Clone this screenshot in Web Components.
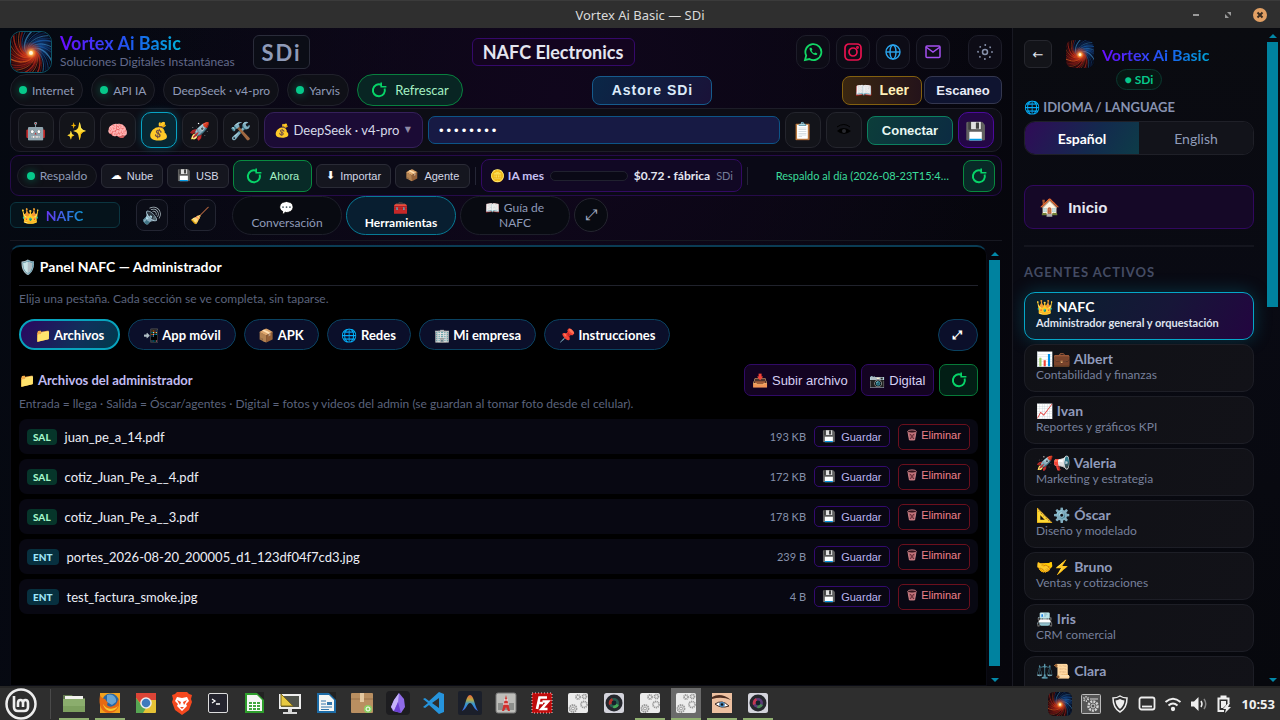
<!DOCTYPE html>
<html lang="es">
<head>
<meta charset="utf-8">
<title>Vortex Ai Basic — SDi</title>
<style>
  html, body { height: 100%; margin: 0; }
  body {
    background: #05060b; color: #e4e6f0; overflow: hidden;
    font-family: Lato, "Noto Color Emoji", sans-serif; font-size: 13px;
    --ui: "Liberation Sans", "Noto Color Emoji", sans-serif;
    --muted: #8f9bb8; --dim: #59617a; --line: #1c1d28; --cyan: #00b4d8;
  }
</style>
</head>
<body>
<vx-desktop></vx-desktop>

<script>
const BASE = `<style>
  *, *::before, *::after { box-sizing: border-box; }
  :host { display: block; min-width: 0; }
  :host([hidden]) { display: none; }
  button, select, input { font: inherit; color: inherit; margin: 0; }
  button { display: flex; align-items: center; justify-content: center; gap: 5px; padding: 0; flex: none;
    border: 1px solid #24252f; background: #12131a; white-space: nowrap; cursor: pointer; }
  svg { display: block; flex: none; }
  p, h1, h2, h3 { margin: 0; }
</style>`;

function define(name, html, ready) {
  const template = document.createElement('template');
  template.innerHTML = BASE + html;
  customElements.define(name, class extends HTMLElement {
    constructor() {
      super();
      this.attachShadow({ mode: 'open' }).append(template.content.cloneNode(true));
    }
    connectedCallback() { if (ready) ready(this, this.shadowRoot); }
  });
}

/* Spiral galaxy logo: warm arms on the left and below, cold arms on the right */
function spiral() {
  let out = '';
  const arms = 40;
  for (let i = 0; i < arms; i++) {
    const start = i / arms * Math.PI * 2;
    let d = '';
    for (let s = 0; s <= 16; s++) {
      const r = 3 + s * 1.9, a = start + Math.log(r / 3) * 0.95;
      d += (s ? 'L' : 'M') + (21 + r * Math.cos(a)).toFixed(1) + ' ' + (22 + r * Math.sin(a)).toFixed(1);
    }
    const end = (start + 2.1) % (Math.PI * 2);
    const warm = end > 1.3 && end < 4.5;
    const color = warm ? ['#d8301c', '#6d1010', '#f0641f', '#921a18'][i % 4] : ['#1b62b8', '#0a2354', '#3f95d8', '#113b7c'][i % 4];
    out += `<path d="${d}" stroke="${color}" stroke-width="${i % 3 ? 0.9 : 1.6}" opacity=".65" fill="none"/>`;
  }
  return out;
}
define('vx-logo', `<style>
  :host { width: 42px; height: 42px; flex: none; border-radius: 11px; overflow: hidden; }
  :host([framed]) { border: 1px solid #0e5566; }
  svg { width: 100%; height: 100%; }
</style>
<svg viewBox="0 0 42 42" aria-label="Vortex">
  <defs>
    <radialGradient id="g"><stop offset="0" stop-color="#fff6cf"/><stop offset=".2" stop-color="#ffb04a"/><stop offset=".5" stop-color="#e8481c" stop-opacity=".6"/><stop offset="1" stop-color="#e0401c" stop-opacity="0"/></radialGradient>
    <radialGradient id="r"><stop offset="0" stop-color="#c22a14" stop-opacity=".8"/><stop offset="1" stop-color="#7a1010" stop-opacity="0"/></radialGradient>
    <radialGradient id="b"><stop offset="0" stop-color="#1c62b4" stop-opacity=".8"/><stop offset="1" stop-color="#0b2a60" stop-opacity="0"/></radialGradient>
  </defs>
  <rect width="42" height="42" fill="#07070f"/>
  <circle cx="12" cy="26" r="17" fill="url(#r)"/><circle cx="31" cy="15" r="16" fill="url(#b)"/>
  ${spiral()}
  <circle cx="21" cy="22" r="12" fill="url(#g)"/><circle cx="21" cy="22" r="2" fill="#fff8dc"/>
</svg>`);

define('vx-refresh', `<style>:host { width: 16px; height: 16px; color: #07d468; }</style>
<svg width="16" height="16" viewBox="0 0 16 16" fill="none" stroke="currentColor" stroke-width="2"><path d="M13.6 6.5A6 6 0 1 1 10.6 3"/><path d="M10.2.6v4.2h5.2" stroke-width="1.6"/></svg>`);

define('vx-pill', `<style>
  :host { display: flex; align-items: center; justify-content: center; gap: 5px; height: 32px; padding: 0 8px; border: 1px solid #20212b;
    border-radius: 16px; background: #0f1017; color: var(--muted); white-space: nowrap; font-size: 12px; flex: none; }
  :host([live])::before { content: ""; width: 8px; height: 8px; border-radius: 50%; background: #06c98a; box-shadow: 0 0 8px #06c98a88; }
</style><slot></slot>`);

define('vx-scroll', `<style>
  :host { display: flex; flex-direction: column; align-items: center; width: 11px; flex: none; }
  i { border: 4px solid transparent; height: 0; width: 0; margin: 4px 0; }
  .up { border-bottom-color: #0288a8; border-top-width: 0; }
  .down { border-top-color: #0288a8; border-bottom-width: 0; }
  .track { flex: 1; width: 100%; }
  .thumb { width: 100%; height: var(--size, 50%); background: #00829f; }
</style><i class="up"></i><div class="track"><div class="thumb"></div></div><i class="down"></i>`);

define('vx-titlebar', `<style>
  :host { background: #2f2f2f; border-top: 1px solid #3b3b3b; font: 14px "Noto Sans", sans-serif; color: #dadada; }
  header { display: grid; grid-template-columns: 1fr auto 1fr; align-items: center; height: 27px; padding: 0 13px; }
  nav { grid-column: 3; display: flex; justify-content: flex-end; align-items: center; gap: 18px; }
  h1 { grid-column: 2; font: inherit; font-size: 13px; }
  button { width: 14px; height: 14px; border: 0; background: none; color: #9a9a9a; border-radius: 50%; }
  button.close { background: #e2a064; color: #3a2c20; }
</style>
<header><h1>Vortex Ai Basic — SDi</h1><nav>
  <button aria-label="Minimizar"><svg width="14" height="14"><path d="M4 7h6" stroke="currentColor" stroke-width="2"/></svg></button>
  <button aria-label="Restaurar"><svg width="14" height="14" fill="currentColor"><path d="M6 4h4v4zM4 6v4h4z"/></svg></button>
  <button class="close" aria-label="Cerrar"><svg width="14" height="14"><path d="M4.5 4.5l5 5m0-5l-5 5" stroke="currentColor" stroke-width="2"/></svg></button>
</nav></header>`);

define('vx-brandbar', `<style>
  header { display: flex; justify-content: space-between; align-items: center; height: 42px; }
  .brand { display: flex; align-items: center; gap: 8px; }
  .name { font-size: 18px; line-height: 20px; font-weight: 700; background: linear-gradient(90deg, #6a0cff, #1a5cf0 60%, #00b4d8); background-clip: text; color: transparent; width: max-content; }
  .slogan { font-size: 12px; line-height: 18px; color: #626a8a; width: 182px; white-space: nowrap; }
  .tag { display: grid; place-items: center; width: 57px; height: 34px; margin-left: 3px; border: 1px solid #2a2c3a; border-radius: 6px; background: #0b0d16; color: var(--muted); font-size: 22px; font-weight: 700; letter-spacing: 2px; }
  .company { display: grid; place-items: center; width: 163px; height: 28px; border: 1px solid #35096a; border-radius: 6px; background: #13041f; font-size: 18px; font-weight: 700; }
  nav { display: flex; gap: 6px; }
  nav button { width: 34px; height: 34px; border-radius: 10px; border-color: #1d1d29; background: #0d0c16; }
  nav button:last-child { margin-left: 12px; color: #8791ab; }
</style>
<header>
  <div class="brand"><vx-logo framed></vx-logo><div><div class="name">Vortex Ai Basic</div><div class="slogan">Soluciones Digitales Instantáneas</div></div><span class="tag">SDi</span></div>
  <div class="company">NAFC Electronics</div>
  <nav>
    <button aria-label="WhatsApp"><svg width="20" height="20" viewBox="0 0 20 20" fill="none" stroke="#12d765" stroke-width="1.8"><path d="M2 18l1.2-4.4A8 8 0 1 1 6.4 17z"/><path d="M6.800 5.700c-1.600 2.600 4.500 9.200 7.300 6.800l.2-1.100-2.100-1-.9.900c-1.200-.4-2.300-1.500-2.700-2.600l.8-.9-.9-2.100z" fill="#12d765" stroke="none"/></svg></button>
    <button aria-label="Instagram"><svg width="18" height="18" viewBox="0 0 18 18" fill="none" stroke="#e9124f" stroke-width="1.7"><rect x="1" y="1" width="16" height="16" rx="4"/><circle cx="9" cy="9" r="4"/><circle cx="13.5" cy="4.5" r=".6"/></svg></button>
    <button aria-label="Sitio web"><svg width="18" height="18" viewBox="0 0 18 18" fill="none" stroke="#2aa5ee" stroke-width="1.4"><circle cx="9" cy="9" r="7"/><ellipse cx="9" cy="9" rx="3" ry="7"/><path d="M2 9h14"/></svg></button>
    <button aria-label="Correo"><svg width="16" height="14" viewBox="0 0 16 14" fill="none" stroke="#a44ff0" stroke-width="1.5"><rect x="1" y="1" width="14" height="11.5" rx="1"/><path d="M1 2l7 5 7-5"/></svg></button>
    <button aria-label="Ajustes"><svg width="18" height="18" viewBox="0 0 18 18" fill="none" stroke="currentColor" stroke-width="1.5"><circle cx="9" cy="9" r="2.5"/><circle cx="9" cy="9" r="7" stroke-width="1.8" stroke-linecap="round" stroke-dasharray=".1 5.4"/></svg></button>
  </nav>
</header>`);

define('vx-statusbar', `<style>
  section, div { display: flex; align-items: center; }
  section { justify-content: space-between; height: 32px; margin-top: 1px; }
  .pills { gap: 8px; }
  .read { gap: 2px; }
  .refresh { gap: 8px; width: 106px; height: 32px; border-radius: 16px; border-color: #08803f; background: #082523; color: #a6f0c4; font-size: 13px; }
  .store, .read button { font-family: var(--ui); font-weight: 700; font-size: 13px; border-radius: 8px; height: 28px; }
  .store { width: 120px; height: 29px; font-size: 14px; letter-spacing: 1px; color: #dcebfa; border-color: #165b8c; background: linear-gradient(120deg, #0a2747, #1a1238); }
  .read .book { width: 80px; height: 29px; gap: 7px; font-size: 14px; color: #fff0b8; border-color: #83600f; background: linear-gradient(90deg, #3a2710, #24131a); }
  .read .scan { width: 78px; border-color: #34374f; background: #0f1430; color: #e8ebf8; }
</style>
<section>
  <div class="pills"><vx-pill live>Internet</vx-pill><vx-pill live>API IA</vx-pill><vx-pill>DeepSeek · v4-pro</vx-pill><vx-pill live>Yarvis</vx-pill>
    <button class="refresh"><vx-refresh></vx-refresh>Refrescar</button></div>
  <button class="store">Astore SDi</button>
  <div class="read"><button class="book"><span>📖</span>Leer</button><button class="scan">Escaneo</button></div>
</section>`);

define('vx-providerbar', `<style>
  form { display: flex; align-items: center; gap: 5px; height: 44px; margin: 2px 0 0; padding: 0 7px; border: 1px solid #1d1d28; border-radius: 10px; background: #0d0d15; }
  button { width: 36px; height: 36px; border-radius: 10px; border-color: #24252d; background: #13141a; font-size: 17px; }
  .on { border-color: #08a3c4; background: #082733; box-shadow: 0 0 8px #00b4d84d; }
  .model { position: relative; flex: none; }
  select { appearance: none; display: block; width: 159px; height: 36px; padding: 0 9px; border: 1px solid #35205a; border-radius: 10px; background: #1b0b35; color: #d6d8e8; font-size: 13px; }
  .model span { position: absolute; right: 12px; top: 12px; color: #8f8aa6; font: 8px/12px "DejaVu Sans"; pointer-events: none; }
  input { flex: 1; min-width: 0; height: 28px; padding: 0 10px; border: 1px solid #0d5487; border-radius: 7px; background: #171a44; color: #fff; font: 13px var(--ui); letter-spacing: 3px; }
  .go { width: 86px; height: 29px; border-radius: 8px; border-color: #0c8060; background: linear-gradient(110deg, #0c3d3a, #0c2b42); color: #e6f7f2; font: 700 13px var(--ui); }
  .save { border-color: #4b0a9c; background: #230745; }
</style>
<form onsubmit="return false">
  <button type="button" aria-label="Robot">🤖</button><button type="button" aria-label="Gemini">✨</button><button type="button" aria-label="Cerebro">🧠</button>
  <button type="button" class="on" aria-label="DeepSeek">💰</button><button type="button" aria-label="Cohete">🚀</button><button type="button" aria-label="Herramientas">🛠️</button>
  <label class="model"><select aria-label="Modelo"><option>💰 DeepSeek · v4-pro</option></select><span>▼</span></label>
  <input type="password" value="abcdefgh" aria-label="Clave API" autocomplete="off">
  <button type="button" aria-label="Pegar">📋</button>
  <button type="button" aria-label="Mostrar"><svg width="16" height="14" viewBox="0 0 16 14"><path d="M1 4q7-5 13 0" fill="none" stroke="#000"/><path d="M1 8q6-6 14 0-7 6-14 0" fill="#000"/><circle cx="8" cy="8" r="2" fill="#292a30"/></svg></button>
  <button class="go">Conectar</button><button type="button" class="save" aria-label="Guardar">💾</button>
</form>`);

define('vx-backupbar', `<style>
  section { display: flex; align-items: center; gap: 4px; height: 41px; margin-top: 3px; padding: 0 6px; border: 1px solid #260b4a; border-radius: 9px; background: #0a0916; }
  vx-pill { height: 24px; width: 80px; padding: 0; }
  button { height: 24px; border-radius: 6px; border-color: #2a2b36; background: #15161f; color: #d3d7e6; font: 11px var(--ui); }
  .w1 { width: 62px; } .w2 { width: 75px; } .w3 { width: 79px; }
  .mono { font-family: "DejaVu Sans"; color: #fff; }
  .green { height: 32px; gap: 8px; border-radius: 8px; border-color: #088a40; background: #082a27; color: #a6f0c4; }
  .icon { width: 32px; }
  hr { width: 1px; height: 18px; margin: 0 1px; border: 0; background: #252636; flex: none; }
  .cost { display: flex; align-items: center; gap: 6px; width: 261px; height: 33px; padding: 0 8px; border: 1px solid #330a63; border-radius: 8px; background: #110824; font-size: 12px; flex: none; }
  .cost b { white-space: nowrap; } .cost b:first-child { color: #c5c0f2; }
  .bar { flex: 1; height: 10px; border: 1px solid #20212f; border-radius: 5px; background: #0a0916; }
  small { font-size: 11px; color: #747c98; }
  p { flex: 1; min-width: 0; padding-right: 10px; text-align: right; font-size: 11px; color: #3bdc9b; white-space: nowrap; }
</style>
<section>
  <vx-pill live>Respaldo</vx-pill>
  <button class="w1"><span class="mono">☁&#xFE0E;</span>Nube</button><button class="w1">💾 <span>USB</span></button>
  <button class="green w3"><vx-refresh></vx-refresh>Ahora</button>
  <button class="w2"><span class="mono">⬇&#xFE0E;</span>Importar</button><button class="w2">📦 <span>Agente</span></button>
  <hr>
  <div class="cost"><b>🪙 IA mes</b><div class="bar"></div><b>$0.72 · fábrica</b><small>SDi</small></div>
  <hr>
  <p>Respaldo al día (2026-08-23T15:4…</p>
  <button class="green icon" aria-label="Actualizar"><vx-refresh></vx-refresh></button>
</section>`);

define('vx-viewtabs', `<style>
  nav { display: flex; align-items: center; gap: 4px; height: 45px; padding-bottom: 6px; border-bottom: 1px solid #171821; }
  .who { display: flex; align-items: center; gap: 6px; width: 110px; height: 26px; margin-right: 12px; padding: 0 10px; border: 1px solid #0b3540; border-radius: 6px; background: #05131b; font-size: 15px; font-weight: 700; }
  .who span { background: linear-gradient(90deg, #6536f0, #1197d8); background-clip: text; color: transparent; font-size: 14px; }
  .tool { width: 32px; height: 32px; margin-right: 12px; border-radius: 8px; border-color: #232532; background: #0b0d17; font-size: 16px; }
  .tab { width: 110px; height: 39px; border-radius: 20px; border-color: #1d1f2a; background: #080a11; color: var(--muted); font-size: 12px; line-height: 15px; white-space: normal; text-align: center; }
  .tab.on { border-color: #077a95; background: #081e30; color: #fff; font-weight: 700; }
  .round { width: 34px; height: 34px; border-radius: 50%; background: #080a11; color: #a2abc2; font: 15px "DejaVu Sans"; }
</style>
<nav>
  <div class="who">👑<span>NAFC</span></div>
  <button class="tool" aria-label="Sonido">🔊</button><button class="tool" aria-label="Limpiar">🧹</button>
  <button class="tab"><span>💬<br>Conversación</span></button><button class="tab on"><span>🧰<br>Herramientas</span></button><button class="tab"><span>📖 Guía de<br>NAFC</span></button>
  <button class="round" aria-label="Expandir">⤢</button>
</nav>`);

define('vx-file', `<style>
  :host { display: flex; align-items: center; gap: 8px; height: 35px; padding: 0 8px; border-radius: 8px; background: #080812; color: #eceef6; font-size: 13px; }
  .kind { padding: 0 6px; height: 16px; border-radius: 4px; background: #06352a; color: #a3f5c8; font-size: 10px; line-height: 16px; font-weight: 900; }
  :host([entry]) .kind { background: #07303f; color: #9fe6fa; }
  .name { flex: 1; min-width: 0; }
  .size { color: #8590aa; font-size: 11px; }
  button { font: 11px var(--ui); height: 21px; width: 76px; border-radius: 5px; border-color: #330a6e; background: #090713; color: #b9b4f0; }
  button.del { width: 72px; height: 26px; gap: 4px; padding-bottom: 3px; border-color: #6b0f1d; color: #ee8088; }
</style>
<span class="kind"><slot name="kind"></slot></span><span class="name"><slot></slot></span><span class="size"><slot name="size"></slot></span>
<button>💾 <span>Guardar</span></button>
<button class="del"><svg width="10" height="12" viewBox="0 0 10 12" fill="#b0636b" stroke="#e59298" stroke-width=".8"><path d="M1 3l1.4 8h5.2L9 3z"/><ellipse cx="5" cy="2.5" rx="4.3" ry="1.6" fill="#36141c"/><path d="M3 5l4 5m0-5l-4 5" stroke="#4d1d26"/></svg>Eliminar</button>`);

define('vx-panel', `<style>
  :host { flex: 1; min-height: 0; display: flex; gap: 2px; margin-top: 4px; padding-right: 2px; }
  main { flex: 1; min-width: 0; padding: 10px 8px 0; border: 1px solid #0a0b14; border-top: 2px solid #0a3c54; border-radius: 10px 10px 0 0; background: #000; overflow: hidden; }
  h2 { height: 29px; border-bottom: 1px solid #20222c; font-size: 14px; line-height: 20px; color: #fff; }
  .hint { font-size: 12px; line-height: 16px; color: #5b637c; }
  .hint.first { margin-top: 5px; }
  .tabs { display: flex; gap: 8px; height: 32px; margin-top: 12px; }
  .tabs button { height: 31px; padding: 0 14px; border-radius: 16px; border-color: #0a4260; background: #0b0f2a; color: #fff; font-weight: 700; font-size: 13px; }
  .tabs .on { border: 2px solid #08a3bd; background: linear-gradient(120deg, #2b0660, #10305a 60%, #003a4c); }
  .tabs .wide { width: 40px; height: 32px; padding: 0; margin-left: auto; font: 700 12px "DejaVu Sans"; }
  .head { display: flex; align-items: center; gap: 5px; margin-top: 13px; height: 32px; }
  h3 { flex: 1; font-size: 13px; color: #c0bcf2; }
  .head button { height: 32px; width: 112px; border-radius: 7px; border-color: #300a66; background: #130321; color: #d6d0f2; font: 13px var(--ui); }
  .head .cam { width: 73px; }
  .head .ref { width: 39px; border-color: #077a38; background: #021e15; }
  .files { display: grid; gap: 5px; margin-top: 7px; }
  vx-scroll { --size: 98%; padding: 3px 0 0; }
</style>
<main>
  <h2>🛡️ Panel NAFC — Administrador</h2>
  <p class="hint first">Elija una pestaña. Cada sección se ve completa, sin taparse.</p>
  <div class="tabs"><button class="on">📁 Archivos</button><button>📲 App móvil</button><button>📦 APK</button><button>🌐 Redes</button><button>🏢 Mi empresa</button><button>📌 Instrucciones</button><button class="wide" aria-label="Ampliar">⤢</button></div>
  <div class="head"><h3>📁 Archivos del administrador</h3><button>📥 Subir archivo</button><button class="cam">📷 Digital</button><button class="ref" aria-label="Actualizar"><vx-refresh></vx-refresh></button></div>
  <p class="hint">Entrada = llega · Salida = Óscar/agentes · Digital = fotos y videos del admin (se guardan al tomar foto desde el celular).</p>
  <div class="files">
    <vx-file><span slot="kind">SAL</span>juan_pe_a_14.pdf<span slot="size">193 KB</span></vx-file>
    <vx-file><span slot="kind">SAL</span>cotiz_Juan_Pe_a__4.pdf<span slot="size">172 KB</span></vx-file>
    <vx-file><span slot="kind">SAL</span>cotiz_Juan_Pe_a__3.pdf<span slot="size">178 KB</span></vx-file>
    <vx-file entry><span slot="kind">ENT</span>portes_2026-08-20_200005_d1_123df04f7cd3.jpg<span slot="size">239 B</span></vx-file>
    <vx-file entry><span slot="kind">ENT</span>test_factura_smoke.jpg<span slot="size">4 B</span></vx-file>
  </div>
</main>
<vx-scroll></vx-scroll>`);

define('vx-agent', `<style>
  button { display: block; width: 100%; height: 48px; padding: 0 11px 3px; text-align: left; border-radius: 11px; border-color: #1d1e26; background: linear-gradient(120deg, #101116, #121218); color: #909bbb; }
  b { display: block; font-size: 14px; line-height: 17px; }
  span { display: block; height: 16px; font-size: 12px; line-height: 16px; color: #77809b; }
  :host([active]) button { border-color: #05a7c8; background: linear-gradient(120deg, #08222e, #171638 60%, #230540); box-shadow: 0 0 18px #00b4d840; }
  :host([active]) b { color: #fff; } :host([active]) span { color: #dfe3ee; font-weight: 700; font-size: 11px; }
</style><button><b><slot></slot></b><span><slot name="role"></slot></span></button>`);

define('vx-sidebar', `<style>
  :host { display: flex; justify-content: space-between; width: 268px; min-height: 0; border-left: 1px solid #181922; padding: 0 2px 0 11px; background: linear-gradient(180deg, #0a0b10, #090a13 40%, #07080d); overflow: hidden; }
  aside { width: 230px; padding-top: 12px; overflow: visible; }
  .top { display: flex; align-items: center; gap: 14px; }
  .top button { width: 28px; height: 28px; border-radius: 6px; border-color: #26272e; background: #131419; font: 13px "DejaVu Sans"; }
  .brand { display: flex; align-items: center; gap: 8px; font-size: 16px; font-weight: 700; }
  .brand span { background: linear-gradient(90deg, #6a0cff, #1a5cf0 60%, #00a4d8); background-clip: text; color: transparent; }
  vx-logo { width: 28px; height: 28px; border-radius: 7px; }
  .state { width: 46px; height: 21px; margin: 1px auto 0; border: 1px solid #0b3830; border-radius: 11px; background: #071613; color: #06c98a; font-size: 12px; line-height: 19px; font-weight: 700; text-align: center; }
  h3 { font-size: 13px; line-height: 16px; color: #8792b0; margin-top: 9px; font-weight: 700; }
  .lang { display: grid; grid-template-columns: 1fr 1fr; height: 34px; margin-top: 6px; border: 1px solid #1f2028; border-radius: 11px; overflow: hidden; }
  .lang button { border: 0; font-size: 14px; color: var(--muted); }
  .lang .on { color: #fff; font-weight: 700; background: linear-gradient(120deg, #300b58, #132a4e 60%, #0d3c48); }
  .home { width: 100%; height: 44px; margin-top: 30px; padding: 0 14px; justify-content: flex-start; gap: 8px; border-color: #31085f; border-radius: 9px; background: #150827; font: 700 15px var(--ui); }
  .home span { font-size: 17px; }
  hr { margin: 16px 0; height: 2px; border: 0; background: #14151e; }
  h3.list { margin-top: 0; line-height: 18px; color: #444c64; letter-spacing: 1px; }
  .agents { display: grid; gap: 4px; margin-top: 11px; }
  vx-scroll { --size: 42%; padding-top: 2px; }
</style>
<aside>
  <div class="top"><button aria-label="Volver">←</button><div class="brand"><vx-logo></vx-logo><span>Vortex Ai Basic</span></div></div>
  <div class="state">● SDi</div>
  <h3>🌐 IDIOMA / LANGUAGE</h3>
  <div class="lang"><button class="on">Español</button><button>English</button></div>
  <button class="home"><span>🏠</span>Inicio</button>
  <hr>
  <h3 class="list">AGENTES ACTIVOS</h3>
  <div class="agents">
    <vx-agent active>👑 NAFC<span slot="role">Administrador general y orquestación</span></vx-agent>
    <vx-agent>📊💼 Albert<span slot="role">Contabilidad y finanzas</span></vx-agent>
    <vx-agent>📈 Ivan<span slot="role">Reportes y gráficos KPI</span></vx-agent>
    <vx-agent>🚀📢 Valeria<span slot="role">Marketing y estrategia</span></vx-agent>
    <vx-agent>📐⚙️ Óscar<span slot="role">Diseño y modelado</span></vx-agent>
    <vx-agent>🤝⚡ Bruno<span slot="role">Ventas y cotizaciones</span></vx-agent>
    <vx-agent>📇 Iris<span slot="role">CRM comercial</span></vx-agent>
    <vx-agent>⚖️📜 Clara</vx-agent>
  </div>
</aside>
<vx-scroll></vx-scroll>`);

const GEARS = '<rect x="2" y="2" width="20" height="20" rx="2" fill="#ececec"/><g fill="none" stroke="#999" stroke-width="1.8"><circle cx="7" cy="17.5" r="3.5" stroke-dasharray="1.5 .6"/><circle cx="18" cy="13.5" r="3" stroke-dasharray="1.2 .6"/><circle cx="12" cy="6" r="2" stroke-dasharray="1 .5"/><circle cx="18.5" cy="5.5" r="2" stroke-dasharray="1 .5"/></g><circle cx="7" cy="17.5" r="1.5" fill="none" stroke="#999"/>';
const doc = (color, inner) => `<path d="M3 2h13l6 6v14H3z" fill="${color}"/><path d="M5 4h10l5 5v11H5z" fill="#f4f6f4"/><path d="M14 1h8v8z" fill="#222"/>${inner}`;
const lens = (a, b, c) => `<rect x="2" y="2" width="20" height="20" rx="2.5" fill="#d4d4dc"/><circle cx="12" cy="12" r="8.5" fill="#25272d"/><circle cx="12" cy="12" r="5" fill="${a}"/><path d="M12 12L7 14a5.500 5.500 0 0 1 3-7z" fill="${b}"/><path d="M12 12l5 2a5.500 5.500 0 0 1-6 3z" fill="${c}"/><circle cx="12" cy="12" r="2.4" fill="#15212c"/>`;
const APPS = [
  ['Archivos', 'run', '<path d="M1 4h9l2 3h11v14H1z" fill="#61784e"/><path d="M3 5h18v4H3z" fill="#f2f2ee"/><path d="M1 8h22v13H1z" fill="#8bad6d"/><path d="M1 15h22v6H1z" fill="#7da05f"/>'],
  ['Firefox', 'run', '<rect x="2" y="2" width="20" height="20" fill="#f2a11d"/><circle cx="12.5" cy="11" r="8.5" fill="#2766a6"/><path d="M9 4c5-2 10 2 9 7l-4 3-5-3z" fill="#68a4d2"/><path d="M2 4c1 3 3 3 5 4l3 4c-3 2 2 5 5 3 3-1 5-4 5-8 4 9-3 16-10 15C4 21 0 15 2 4" fill="#e66a14"/><path d="M5 13c4 6 10 6 15 2-3 7-13 7-15-2" fill="#f7c52e"/>'],
  ['Chrome', '', '<rect x="2" y="2" width="20" height="20" rx="1" fill="#e6c236"/><path d="M2 2h20v7H12l-4 5-6-7z" fill="#dc4436"/><path d="M2 7l7 9 3 1-3 5H2z" fill="#57a653"/><circle cx="12" cy="12" r="5.8" fill="#eee"/><circle cx="12" cy="12" r="4.3" fill="#3e7abd"/>'],
  ['Brave', '', '<path d="M7 1h10l2 2 3 1-1 4 1 3-3 8-7 5-7-5-3-8 1-3-1-4 3-1z" fill="#f5481e"/><path d="M7 6l5 1 5-1 2 4-3 3 1 2-5 5-5-5 1-2-3-3z" fill="#fff"/><path d="M7 9l4 2-1 3zM17 9l-4 2 1 3zM10 16h4l-2 2z" fill="#f5481e"/>'],
  ['Terminal', '', '<rect x="2.5" y="2.5" width="19" height="19" rx="1.5" fill="#24242e" stroke="#ddd"/><path d="M6 8l3 2-3 2M10 13h4" fill="none" stroke="#fff" stroke-width="1.3"/>'],
  ['Calc', '', doc('#2e9e2c', '<path d="M7 11h11v8H7z" fill="#42a640"/><path d="M7 13.500h11M7 16.500h11M10.500 11v8M14.500 11v8" stroke="#fff"/>')],
  ['Pantalla', '', '<rect x="1" y="3" width="22" height="15" fill="#eee"/><rect x="3" y="5" width="18" height="11" fill="#50534c"/><path d="M3 3v12h12z" fill="#e7c941" stroke="#7d6a1d"/><path d="M10 18h4v3h5v2H5v-2h5z" fill="#d8d8d8"/>'],
  ['Writer', '', doc('#1d6ca6', '<path d="M7 10h5M7 13h5M7 16h11M7 18.500h8" stroke="#3476ab" stroke-width="1.2"/><rect x="13" y="11" width="5" height="3" fill="#3476ab"/>')],
  ['Paquetes', '', '<rect x="1" y="2" width="22" height="20" rx="1" fill="#b98f61"/><path d="M1 8h22" stroke="#9a734b"/><path d="M10 2h4v9h-4z" fill="#e4c8a0"/><circle cx="18" cy="18" r="4" fill="#8bcf63"/><circle cx="18" cy="18" r="2" fill="none" stroke="#fff"/>'],
  ['Obsidian', '', '<rect width="24" height="24" rx="4" fill="#1d1d20"/><path d="M13 2l5 6 1 8-4 6-8-2-2-4 3-7z" fill="#8f6be8"/><path d="M13 2l-1 9-4 9-3-4 3-7z" fill="#c5b2fa"/><path d="M12 11l3 11-7-2z" fill="#6b3fd2"/>'],
  ['Code', '', '<path d="M17 1l5 2v18l-5 2L7 14l-4 3-2-1 5-4-5-4 2-1 4 3zM17 7l-7 5 7 5z" fill="#2694dc" fill-rule="evenodd"/>'],
  ['Arco', '', '<defs><linearGradient id="arc" x2="0" y2="1"><stop stop-color="#f0663c"/><stop offset=".3" stop-color="#b9aa45"/><stop offset=".55" stop-color="#3799cf"/><stop offset="1" stop-color="#3d64e6"/></linearGradient></defs><rect width="24" height="24" rx="2" fill="#1b1f2a"/><path d="M4 20C8 14 8 4 12 4s4 10 8 16c-5-2-5-8-8-8s-3 6-8 8" fill="url(#arc)"/>'],
  ['Red', '', '<rect x="2" y="2" width="20" height="20" rx="2" fill="#bdbdb9" stroke="#777"/><rect x="4" y="12" width="16" height="7" fill="#8d8f8c"/><path d="M12 4l-4 16h2l2-4 2 4h2z" fill="#d2302c"/><path d="M10 9h4M9 13h6" stroke="#fff"/>'],
  ['FileZilla', '', '<rect x="2" y="2" width="20" height="20" fill="#bf0c0c" stroke="#f5caca" stroke-dasharray="1 2"/><path d="M7 18L9.500 6.500H17M8.500 12H13M12.500 10.500H18L11.500 18H17.500" fill="none" stroke="#fff" stroke-width="2.6"/>'],
  ['Proceso', '', GEARS],
  ['Cámara', '', lens('#285d51', '#b2332b', '#45aa58')],
  ['Proceso 2', 'run', GEARS],
  ['Proceso 3', 'run active', GEARS],
  ['Ojo', 'run', '<rect x="2" y="2" width="20" height="20" fill="#edc0a0"/><path d="M2 6q9-5 19 3-9-4-19-1" fill="#4d2d20"/><path d="M5 13q7-5 14 2-8 3-14-2" fill="#fff" stroke="#3a2620"/><circle cx="12" cy="13.5" r="2.8" fill="#4c86b6"/><circle cx="12" cy="13.5" r="1.2" fill="#111"/>'],
  ['Foto', 'run', lens('#5b3b77', '#c53752', '#4a8656')]
];
define('vx-taskbar', `<style>
  :host { background: #2e2e2e; border-top: 2px solid #242424; color: #f0f0f0; font: 700 13px "Noto Sans", sans-serif; }
  footer { display: flex; align-items: center; height: 32px; padding: 0 5px; }
  .menu { width: 32px; height: 32px; border: 0; background: none; }
  hr { width: 1px; height: 30px; margin: 0 8px 0 13px; border: 0; background: #4a4a4a; }
  .apps { display: flex; gap: 6px; }
  .apps button { width: 30px; height: 32px; border: 0; border-radius: 0; background: none; border-bottom: 2px solid transparent; }
  .apps .run { border-color: #90b070; } .apps .active { background: #6a6a6a; }
  .tray { display: flex; align-items: center; gap: 8px; margin-left: auto; }
  .tray time { margin-left: 2px; }
  vx-logo { width: 24px; height: 24px; border-radius: 6px; }
</style>
<footer>
  <button class="menu" aria-label="Menú"><svg width="32" height="32" viewBox="0 0 32 32" fill="none" stroke="#eee"><circle cx="16" cy="16" r="14.5" stroke-width="2.5"/><path d="M9 8v11q0 4 4 4h6q4 0 4-4v-4q0-3-2.500-3T18 15v4m0-4q0-3-2.500-3T13 15v4" stroke-width="2.6"/></svg></button>
  <hr><div class="apps"></div>
  <div class="tray">
    <vx-logo></vx-logo>
    <svg width="22" height="22" viewBox="0 0 22 22"><rect x="1.5" y="1.5" width="19" height="19" rx="1" fill="#555" stroke="#bbb"/><g fill="none" stroke="#d4d4d4"><circle cx="13" cy="13" r="4.5" stroke-width="2.5" stroke-dasharray="2 1"/><circle cx="13" cy="13" r="2"/><circle cx="6" cy="6" r="2" stroke-width="2" stroke-dasharray="1 1"/><path d="M10 6h8"/></g></svg>
    <svg width="20" height="18" viewBox="0 0 20 18"><path d="M10 1q3 2 7 2 0 10-7 14Q3 13 3 3q4 0 7-2z" fill="none" stroke="#eee" stroke-width="1.5"/><path d="M10 4q2 1 4.500 1.500Q14 11 10 14q-4-3-4.500-8.500Q8 5 10 4z" fill="#eee"/></svg>
    <svg width="18" height="16" viewBox="0 0 18 16" fill="none" stroke="#eee" stroke-width="1.8"><rect x="1.5" y="1.5" width="15" height="12" rx="2"/><path d="M4 10.500h10"/></svg>
    <svg width="18" height="16" viewBox="0 0 18 16" fill="none" stroke="#eee" stroke-width="1.9"><path d="M1.500 6q7.500-6.500 15 0M4.500 9.500q4.500-4 9 0"/><circle cx="9" cy="13" r="1.2" fill="#eee"/></svg>
    <svg width="18" height="16" viewBox="0 0 18 16"><path d="M1 5.500h3L8.500 1v14L4 10.500H1z" fill="#eee"/><path d="M11 5q2 3 0 6" fill="none" stroke="#eee" stroke-width="1.5"/><path d="M14 3q3.500 5 0 10" fill="none" stroke="#888" stroke-width="1.5"/></svg>
    <svg width="16" height="18" viewBox="0 0 16 18"><path d="M8 16H2.500V3.500h10V8M5.500 3.500v-2h4v2" fill="none" stroke="#eee" stroke-width="2"/><path d="M5 6h5v4l-3 3H5zM12 8l-5 6h3l-1 4 6-6h-3l2-4z" fill="#eee"/></svg>
    <time>10:53</time>
  </div>
</footer>`, (el, root) => {
  root.querySelector('.apps').innerHTML = APPS.map(([name, cls, art]) =>
    `<button class="${cls}" aria-label="${name}"><svg width="24" height="24" viewBox="0 0 24 24">${art}</svg></button>`).join('');
});

define('vx-desktop', `<style>
  :host { display: grid; grid-template-rows: auto minmax(0, 1fr) auto; height: 100vh; }
  .window { display: flex; min-height: 0; }
  .work { flex: 1; min-width: 0; display: flex; flex-direction: column; padding: 3px 10px 0;
    background: radial-gradient(ellipse at 55% 10%, #10061c, transparent 55%), linear-gradient(100deg, #050911, #090813 45%, #06060c); }
</style>
<vx-titlebar></vx-titlebar>
<div class="window">
  <div class="work">
    <vx-brandbar></vx-brandbar><vx-statusbar></vx-statusbar><vx-providerbar></vx-providerbar><vx-backupbar></vx-backupbar><vx-viewtabs></vx-viewtabs>
    <vx-panel></vx-panel>
  </div>
  <vx-sidebar></vx-sidebar>
</div>
<vx-taskbar></vx-taskbar>`);
</script>
</body>
</html>
